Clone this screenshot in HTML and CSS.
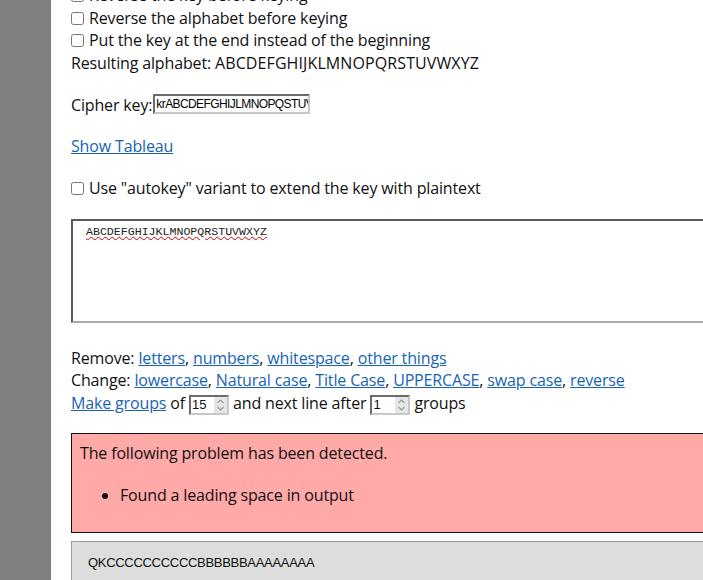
FILE: index.html
```html
<!DOCTYPE html>
<html>
<head>
<meta charset="utf-8">
<link rel="stylesheet" href="styles.css">
</head>
<body>
<div class="page">
  <div class="opts">
    <label class="line"><input type="checkbox" class="cb"> Reverse the key before keying</label>
    <label class="line"><input type="checkbox" class="cb"> Reverse the alphabet before keying</label>
    <label class="line"><input type="checkbox" class="cb"> Put the key at the end instead of the beginning</label>
    <div class="line">Resulting alphabet: <span class="alpha">ABCDEFGHIJKLMNOPQRSTUVWXYZ</span></div>
  </div>

  <div class="cipher line">Cipher key:<span class="keybox">krABCDEFGHIJLMNOPQSTUVWXYZ</span></div>

  <div class="tableau line"><a href="#" class="link">Show Tableau</a></div>

  <label class="autokey line"><input type="checkbox" class="cb"> Use "autokey" variant to extend the key with plaintext</label>

  <div class="textarea"><span class="spell">ABCDEFGHIJKLMNOPQRSTUVWXYZ</span></div>

  <div class="tools">
    <div class="line">Remove: <a href="#" class="link">letters</a>, <a href="#" class="link">numbers</a>, <a href="#" class="link">whitespace</a>, <a href="#" class="link">other things</a></div>
    <div class="line">Change: <a href="#" class="link">lowercase</a>, <a href="#" class="link">Natural case</a>, <a href="#" class="link">Title Case</a>, <a href="#" class="link">UPPERCASE</a>, <a href="#" class="link">swap case</a>, <a href="#" class="link">reverse</a></div>
    <div class="line"><a href="#" class="link">Make groups</a> of <span class="numbox"><span class="num">15</span><span class="spin"><svg width="9" height="14" viewBox="0 0 9 14"><path d="M1.5 5 L4.5 2 L7.5 5 M1.5 9 L4.5 12 L7.5 9" fill="none" stroke="#9a9a9a" stroke-width="1.2"/></svg></span></span> and next line after <span class="numbox"><span class="num">1</span><span class="spin"><svg width="9" height="14" viewBox="0 0 9 14"><path d="M1.5 5 L4.5 2 L7.5 5 M1.5 9 L4.5 12 L7.5 9" fill="none" stroke="#9a9a9a" stroke-width="1.2"/></svg></span></span> groups</div>
  </div>

  <div class="problem">
    <div class="problem-title">The following problem has been detected.</div>
    <ul class="problem-list">
      <li>Found a leading space in output</li>
    </ul>
  </div>

  <div class="output">QKCCCCCCCCCCBBBBBBAAAAAAAA</div>
</div>
</body>
</html>
```

FILE: styles.css
```css
html, body {
  margin: 0;
  padding: 0;
  overflow: hidden;
}
body {
  background: #808080;
  height: 580px;
}
.page {
  margin-left: 51px;
  margin-top: -16px;
  background: #ffffff;
  width: 700px;
  min-height: 620px;
  padding: 0 20px;
  font-family: "Open Sans", "Noto Sans", sans-serif;
  font-size: 16px;
  letter-spacing: -0.15px;
  line-height: 22.5px;
  color: #111111;
}
.line {
  display: block;
  white-space: nowrap;
}
.alpha {
  letter-spacing: 0.1px;
}
.cb {
  width: 13px;
  height: 13px;
  margin: 0 1px 0 0;
  vertical-align: -1px;
}
.cipher {
  margin-top: 20px;
}
.keybox {
  display: inline-block;
  margin-left: 1px;
  width: 151px;
  height: 16px;
  overflow: hidden;
  white-space: nowrap;
  vertical-align: -3px;
  border-style: solid;
  border-width: 2px;
  border-color: #6b6b6b #c8c8c8 #c8c8c8 #6b6b6b;
  font-family: "Liberation Sans", Arial, sans-serif;
  font-size: 12px;
  letter-spacing: -0.6px;
  line-height: 16px;
  padding: 0 1px;
  color: #000;
}
.tableau {
  margin-top: 18px;
}
.link {
  color: #1763b5;
  text-decoration: underline;
}
.autokey {
  margin-top: 20px;
}
.textarea {
  margin-top: 19px;
  height: 92px;
  border-style: solid;
  border-width: 2px;
  border-color: #5a5a5a #bdbdbd #a9a9a9 #5a5a5a;
  padding: 4px 13px;
  font-family: "Liberation Mono", monospace;
  font-size: 11.6px;
  letter-spacing: 0;
  line-height: 14px;
  color: #222;
}
.spell {
  text-decoration: underline wavy #d00000;
  text-decoration-thickness: 1px;
}
.tools {
  margin-top: 24px;
}
.numbox {
  display: inline-flex;
  align-items: center;
  width: 36px;
  height: 16px;
  vertical-align: 0px;
  border-style: solid;
  border-width: 2px;
  border-color: #6b6b6b #c8c8c8 #c8c8c8 #6b6b6b;
  line-height: 16px;
  font-family: "Liberation Sans", Arial, sans-serif;
  font-size: 13px;
  letter-spacing: 0;
  background: #fff;
}
.num {
  flex: 1;
  padding-left: 1px;
}
.spin {
  width: 13px;
  height: 16px;
  display: flex;
  align-items: center;
  justify-content: center;
  background: #e6e6e6;
}
.problem {
  margin-top: 18px;
  background: #ffa9a9;
  border: 1px solid #111;
  padding: 8px 8px;
  height: 82px;
}
.problem-title {
  line-height: 22px;
}
.problem-list {
  margin: 20px 0 0 0;
  padding-left: 40px;
}
.problem-list li {
  line-height: 22px;
}
.output {
  margin-top: 8px;
  background: #dddddd;
  border: 1px solid #9a9a9a;
  padding: 10px 16px;
  height: 40px;
  font-family: "Liberation Sans", Arial, sans-serif;
  font-size: 13px;
  letter-spacing: -0.3px;
  color: #111;
}
```
